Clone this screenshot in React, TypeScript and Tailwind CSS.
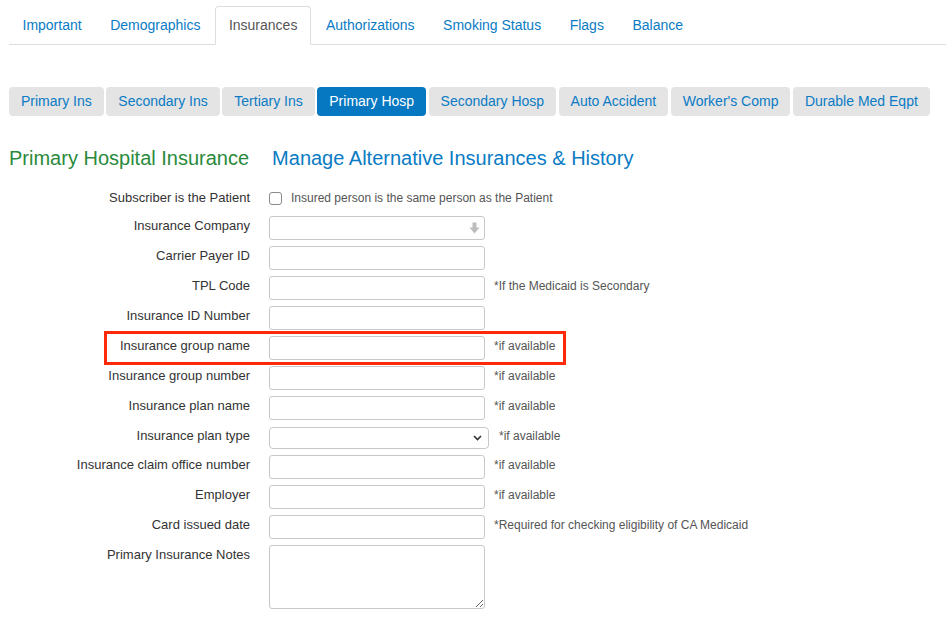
import React from "react";

const topTabs = ["Important", "Demographics", "Insurances", "Authorizations", "Smoking Status", "Flags", "Balance"];
const pills = ["Primary Ins", "Secondary Ins", "Tertiary Ins", "Primary Hosp", "Secondary Hosp", "Auto Accident", "Worker's Comp", "Durable Med Eqpt"];

function Label({ children }: { children: React.ReactNode }) {
  return <div className="w-[250px] shrink-0 text-right text-[13px] leading-[16px] pt-[2px] text-[#333]">{children}</div>;
}

function Help({ children }: { children: React.ReactNode }) {
  return <div className="ml-[9px] text-[12px] leading-[20px] text-[#555]">{children}</div>;
}

function TextRow({ label, help, highlight }: { label: string; help?: string; highlight?: boolean }) {
  return (
    <div className="relative flex items-start mb-[6px]">
      <Label>{label}</Label>
      <div className="ml-[19px] w-[216px] h-[24px] shrink-0 rounded-[3px] border border-[#c8c8c8] bg-white" />
      {help && <Help>{help}</Help>}
      {highlight && (
        <div className="absolute left-[104px] top-[-5px] w-[462px] h-[34px] border-[3px] border-[#ff2a0a]" />
      )}
    </div>
  );
}

export default function App() {
  return (
    <div className="w-[946px] h-[619px] overflow-hidden bg-white font-['Liberation_Sans',Arial,sans-serif]">
      {/* top tabs */}
      <div className="pt-[6px] pl-[9px]">
        <div className="flex border-b border-[#dddddd]">
          {topTabs.map((t) => {
            const active = t === "Insurances";
            return (
              <div
                key={t}
                className={
                  "mr-[1.5px] -mb-px px-[12.5px] py-[10px] text-[14px] leading-[17px] rounded-t-[4px] border " +
                  (active
                    ? "border-[#dddddd] border-b-white bg-white text-[#555]"
                    : "border-transparent text-[#0a7bc4]")
                }
              >
                {t}
              </div>
            );
          })}
        </div>
      </div>

      {/* pills */}
      <div className="flex gap-[2.5px] pl-[9px] mt-[42px]">
        {pills.map((p) => {
          const active = p === "Primary Hosp";
          return (
            <div
              key={p}
              className={
                "px-[12px] py-[6px] text-[14px] leading-[17px] rounded-[4px] " +
                (active ? "bg-[#0578c1] text-white" : "bg-[#e4e4e4] text-[#0a7bc4]")
              }
            >
              {p}
            </div>
          );
        })}
      </div>

      {/* headings */}
      <div className="flex items-baseline pl-[9px] mt-[30px] text-[20px] leading-[24px]">
        <span className="text-[#2a8a3c]">Primary Hospital Insurance</span>
        <span className="ml-[23px] text-[#0a7bc4]">Manage Alternative Insurances &amp; History</span>
      </div>

      {/* form */}
      <div className="mt-[16px]">
        <div className="flex items-center mb-[6px] h-[24px]">
          <div className="w-[250px] shrink-0 text-right text-[13px] leading-[16px] text-[#333]">Subscriber is the Patient</div>
          <div className="ml-[19px] w-[13px] h-[13px] rounded-[3px] border border-[#8a8a8a] bg-white" />
          <div className="ml-[9px] text-[12px] text-[#555]">Insured person is the same person as the Patient</div>
        </div>

        <div className="flex items-start mb-[6px]">
          <Label>Insurance Company</Label>
          <div className="ml-[19px] w-[216px] h-[24px] shrink-0 rounded-[3px] border border-[#c8c8c8] bg-white flex items-center justify-end pr-[4px]">
            <svg width="11" height="12" viewBox="0 0 11 12">
              <path d="M3.5 0.5h4v5h3l-5 6-5-6h3z" fill="#bdbdbd" />
            </svg>
          </div>
        </div>

        <TextRow label="Carrier Payer ID" />
        <TextRow label="TPL Code" help="*If the Medicaid is Secondary" />
        <TextRow label="Insurance ID Number" />
        <TextRow label="Insurance group name" help="*if available" highlight />
        <TextRow label="Insurance group number" help="*if available" />
        <TextRow label="Insurance plan name" help="*if available" />

        <div className="flex items-start mb-[6px] h-[23px]">
          <Label>Insurance plan type</Label>
          <div className="ml-[19px] mt-[1px] w-[220px] h-[22px] shrink-0 rounded-[4px] border border-[#c8c8c8] bg-white flex items-center justify-end pr-[6px]">
            <svg width="9" height="6" viewBox="0 0 9 6">
              <path d="M1 1l3.5 3.5L8 1" fill="none" stroke="#333" strokeWidth="1.6" />
            </svg>
          </div>
          <div className="ml-[10px] text-[12px] leading-[20px] text-[#555]">*if available</div>
        </div>

        <TextRow label="Insurance claim office number" help="*if available" />
        <TextRow label="Employer" help="*if available" />
        <TextRow label="Card issued date" help="*Required for checking eligibility of CA Medicaid" />

        <div className="flex items-start">
          <Label>Primary Insurance Notes</Label>
          <textarea className="ml-[19px] w-[216px] h-[64px] shrink-0 rounded-[3px] border border-[#c8c8c8] bg-white block" />
        </div>
      </div>
    </div>
  );
}
